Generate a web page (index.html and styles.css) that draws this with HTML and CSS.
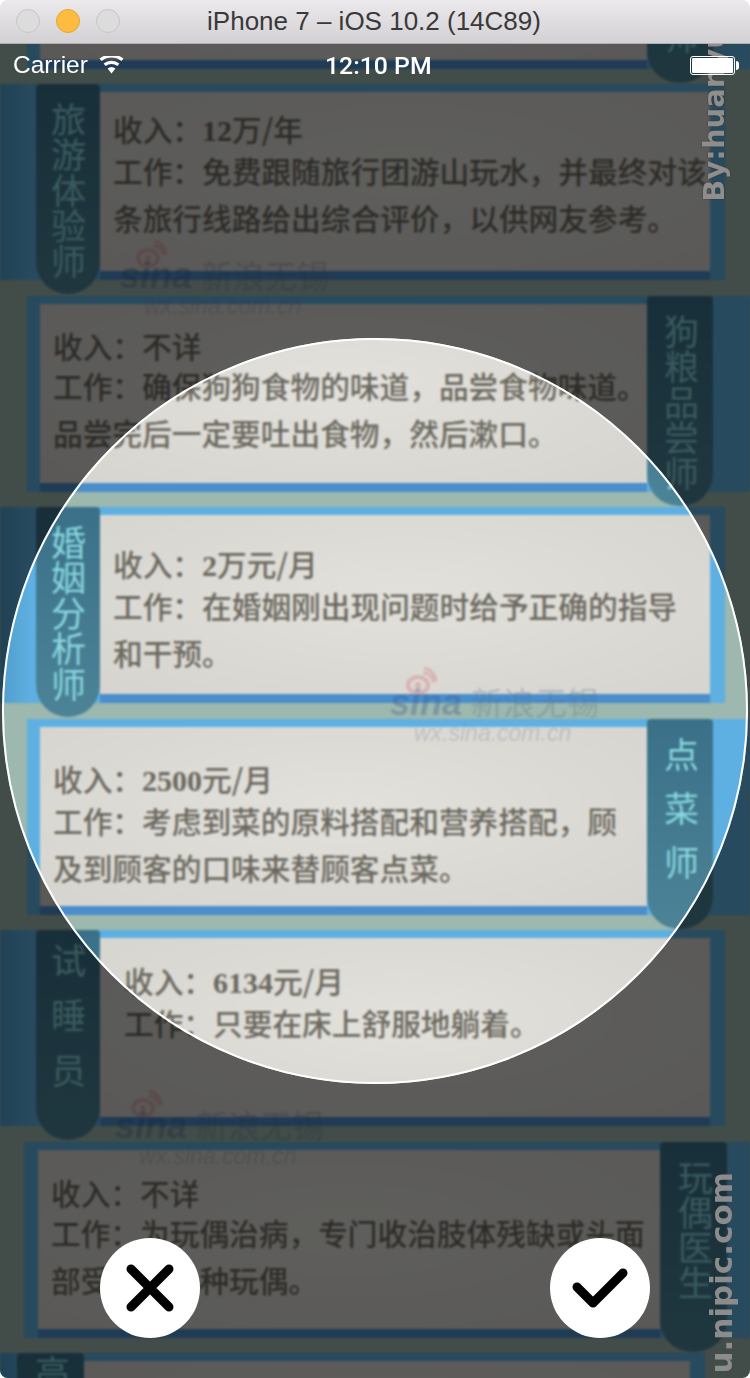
FILE: index.html
```html
<!DOCTYPE html>
<html lang="zh">
<head>
    <meta charset="UTF-8">
    <title>iPhone 7 – iOS 10.2 (14C89)</title>
    <link rel="stylesheet" href="styles.css">
</head>
<body>
    <div class="window">
        <header class="titlebar">
            <span class="light"></span>
            <span class="light light-min"></span>
            <span class="light"></span>
            <div class="title">iPhone 7 – iOS 10.2 (14C89)</div>
        </header>

        <main class="screen">
            <div class="poster">
                <section class="job job-right">
                    <div class="card">
                        <div class="paper"></div>
                        <h3 class="tab tab-cut">师</h3>
                    </div>
                </section>

                <section class="job job-left">
                    <div class="card">
                        <h3 class="tab tab-5">旅游体验师</h3>
                        <div class="paper pad-a">
                            <p class="income">收入：<b class="num">12</b>万/年</p>
                            <p class="duty">工作：免费跟随旅行团游山玩水，并最终对该<br>条旅行线路给出综合评价，以供网友参考。</p>
                        </div>
                    </div>
                    <div class="mark mark-a">
                        <svg class="mark-logo" viewBox="0 0 34 28"><ellipse cx="15" cy="18" rx="10" ry="8" fill="none" stroke="currentColor" stroke-width="4"/><circle cx="15" cy="18" r="3" fill="currentColor"/><path d="M20 6a9 9 0 0 1 10 9M21 1a14 14 0 0 1 12 14" fill="none" stroke="currentColor" stroke-width="3"/></svg>
                        <div class="mark-row"><span class="mark-sina">sina</span><span class="mark-name">新浪无锡</span></div>
                        <div class="mark-url">wx.sina.com.cn</div>
                    </div>
                </section>

                <section class="job job-right">
                    <div class="card">
                        <div class="paper pad-b">
                            <p class="income">收入：不详</p>
                            <p class="duty">工作：确保狗狗食物的味道，品尝食物味道。<br>品尝完后一定要吐出食物，然后漱口。</p>
                        </div>
                        <h3 class="tab tab-5">狗粮品尝师</h3>
                    </div>
                </section>

                <section class="job job-left">
                    <div class="card">
                        <h3 class="tab tab-5">婚姻分析师</h3>
                        <div class="paper pad-c">
                            <p class="income">收入：<b class="num">2</b>万元/月</p>
                            <p class="duty">工作：在婚姻刚出现问题时给予正确的指导<br>和干预。</p>
                        </div>
                    </div>
                    <div class="mark mark-b">
                        <svg class="mark-logo" viewBox="0 0 34 28"><ellipse cx="15" cy="18" rx="10" ry="8" fill="none" stroke="currentColor" stroke-width="4"/><circle cx="15" cy="18" r="3" fill="currentColor"/><path d="M20 6a9 9 0 0 1 10 9M21 1a14 14 0 0 1 12 14" fill="none" stroke="currentColor" stroke-width="3"/></svg>
                        <div class="mark-row"><span class="mark-sina">sina</span><span class="mark-name">新浪无锡</span></div>
                        <div class="mark-url">wx.sina.com.cn</div>
                    </div>
                </section>

                <section class="job job-right">
                    <div class="card">
                        <div class="paper pad-d">
                            <p class="income">收入：<b class="num">2500</b>元/月</p>
                            <p class="duty">工作：考虑到菜的原料搭配和营养搭配，顾<br>及到顾客的口味来替顾客点菜。</p>
                        </div>
                        <h3 class="tab tab-3">点菜师</h3>
                    </div>
                </section>

                <section class="job job-left">
                    <div class="card">
                        <h3 class="tab tab-3 tab-high">试睡员</h3>
                        <div class="paper pad-e">
                            <p class="income">收入：<b class="num">6134</b>元/月</p>
                            <p class="duty">工作：只要在床上舒服地躺着。</p>
                        </div>
                    </div>
                    <div class="mark mark-c">
                        <svg class="mark-logo" viewBox="0 0 34 28"><ellipse cx="15" cy="18" rx="10" ry="8" fill="none" stroke="currentColor" stroke-width="4"/><circle cx="15" cy="18" r="3" fill="currentColor"/><path d="M20 6a9 9 0 0 1 10 9M21 1a14 14 0 0 1 12 14" fill="none" stroke="currentColor" stroke-width="3"/></svg>
                        <div class="mark-row"><span class="mark-sina">sina</span><span class="mark-name">新浪无锡</span></div>
                        <div class="mark-url">wx.sina.com.cn</div>
                    </div>
                </section>

                <section class="job job-right job-shift">
                    <div class="card">
                        <div class="paper pad-f">
                            <p class="income">收入：不详</p>
                            <p class="duty">工作：为玩偶治病，专门收治肢体残缺或头面<br>部受损的各种玩偶。</p>
                        </div>
                        <h3 class="tab tab-4">玩偶医生</h3>
                    </div>
                </section>

                <section class="job job-left job-shift">
                    <div class="card">
                        <h3 class="tab tab-first">高</h3>
                        <div class="paper"></div>
                    </div>
                </section>
            </div>

            <!-- circle is see-through, its spread shadow dims the rest of the poster -->
            <div class="focus"></div>

            <div class="credit credit-by">By:huanyu</div>
            <div class="credit credit-nipic">u.nipic.com</div>

            <div class="statusbar">
                <div class="carrier">
                    Carrier
                    <svg class="wifi" width="25" height="18" viewBox="0 0 25 18"><path d="M12.5 17.5 8.6 12.6a6.2 6.2 0 0 1 7.8 0zM6.6 10.1 4.6 7.6a12.6 12.6 0 0 1 15.8 0l-2 2.5a9.4 9.4 0 0 0-11.8 0zM2.6 5.1.5 2.6a19 19 0 0 1 24 0l-2.1 2.5a15.8 15.8 0 0 0-19.8 0z" fill="#fff"/></svg>
                </div>
                <div class="clock">12:10 PM</div>
                <div class="battery"><span class="battery-fill"></span></div>
            </div>

            <div class="actions">
                <button class="round-btn">
                    <svg width="100" height="100" viewBox="0 0 100 100"><path d="M31 31 69 69M69 31 31 69" fill="none" stroke="#000" stroke-width="9" stroke-linecap="round"/></svg>
                </button>
                <button class="round-btn">
                    <svg width="100" height="100" viewBox="0 0 100 100"><path d="M27 49 43 65 73 35" fill="none" stroke="#000" stroke-width="9" stroke-linecap="round" stroke-linejoin="round"/></svg>
                </button>
            </div>
        </main>
    </div>
</body>
</html>
```

FILE: styles.css
```css
:root {
    --mat: #9db8ae;
    --frame: #5eb0e2;
    --stripe: #4a8ecb;
    --ink: #6c695f;
}

* {
    box-sizing: border-box;
}

body {
    margin: 0;
    background: #fff;
    font-family: "Noto Sans CJK SC", "Liberation Sans", sans-serif;
}

.window {
    width: 750px;
    height: 1378px;
    display: flex;
    flex-direction: column;
    border-radius: 8px;
    overflow: hidden;
}

.titlebar {
    position: relative;
    flex: none;
    height: 44px;
    display: flex;
    align-items: center;
    gap: 16px;
    padding: 0 0 2px 16px;
    background: linear-gradient(#ebe9eb, #d3d1d3);
    border-bottom: 1px solid #b1afb1;
}

.light {
    width: 24px;
    height: 24px;
    border-radius: 50%;
    background: #dcdcdc;
    border: 1px solid #c6c6c6;
}

.light-min {
    background: #fdbc40;
    border-color: #e4a536;
}

.title {
    position: absolute;
    left: 0;
    right: 2px;
    top: 5px;
    text-align: center;
    font-family: "Liberation Sans", sans-serif;
    font-size: 26px;
    line-height: 32px;
    color: #3a393a;
}

.screen {
    position: relative;
    flex: 1;
    overflow: hidden;
    background: var(--mat);
}

.poster {
    margin-top: -171.5px;
    filter: blur(0.8px);
}

.job {
    position: relative;
    height: 211.5px;
}

.card {
    height: 196px;
    display: flex;
    align-items: flex-start;
    background: var(--frame);
}

.job-left .card {
    width: 725px;
    padding-left: 36px;
    background: linear-gradient(90deg, #4f9cc9, var(--frame) 30px);
}

.job-right .card {
    margin-left: 27px;
    padding-left: 13px;
}

.paper {
    flex: 1;
    height: 179px;
    margin-top: 8px;
    padding-left: 13px;
    background: radial-gradient(ellipse at 50% 45%, #e2e1dc, #d6d4cf);
    box-shadow: 0 9px 0 var(--stripe);
    color: var(--ink);
    font-size: 29.7px;
    font-weight: 500;
    white-space: nowrap;
}

.job-left .paper {
    margin-right: 15px;
}

.tab {
    flex: none;
    width: 64px;
    height: 210px;
    margin: 0;
    padding-top: 18px;
    border-radius: 4px 4px 32px 32px;
    background: linear-gradient(#3a7189, #4c8397);
    color: #88d6dd;
    font-size: 35px;
    font-weight: 400;
    line-height: 64px;
    writing-mode: vertical-rl;
    text-orientation: upright;
    text-align-last: justify;
}

.job-right .tab {
    width: 66px;
    margin-right: 37px;
}

.tab-5 {
    padding-bottom: 15px;
}

.tab-4 {
    padding-bottom: 52px;
}

.tab-3 {
    padding-bottom: 49px;
}

.tab-high {
    padding-top: 13px;
    padding-bottom: 52px;
}

.tab-cut {
    padding-top: 146px;
}

.tab-first {
    padding-top: 2px;
}

.job-right.job-shift .card {
    margin-left: 24px;
    padding-left: 14px;
}

.job-right.job-shift .tab {
    width: 67px;
    margin-right: 23px;
}

.job-left.job-shift .card {
    width: 705px;
    padding-left: 17px;
}

.job-left.job-shift .tab {
    width: 67px;
}

.pad-a { padding-top: 20px; }
.pad-b { padding-top: 25px; }
.pad-c { padding-top: 32px; }
.pad-d { padding-top: 35px; }
.pad-e { padding-top: 26px; padding-left: 24px; }
.pad-f { padding-top: 26px; }

.income {
    margin: 0;
    line-height: 33px;
}

.duty {
    margin: 0;
    line-height: 47px;
}

.num {
    font-family: "Liberation Serif", serif;
    font-size: 30px;
}

.mark {
    position: absolute;
    z-index: 2;
    width: 220px;
    color: rgba(216, 112, 112, 0.35);
}

.mark-a { left: 120px; top: 156px; }
.mark-b { left: 390px; top: 160px; }
.mark-c { left: 115px; top: 160px; }

.mark-logo {
    display: block;
    width: 34px;
    height: 28px;
    margin: 0 0 -12px 13px;
}

.mark-row {
    display: flex;
    align-items: baseline;
    gap: 9px;
    line-height: 36px;
}

.mark-sina {
    font-family: "Liberation Sans", sans-serif;
    font-size: 36px;
    font-style: italic;
    font-weight: bold;
    color: rgba(60, 92, 140, 0.36);
}

.mark-name {
    font-size: 32px;
    font-weight: 400;
    color: rgba(90, 110, 135, 0.3);
}

.mark-url {
    margin-left: 24px;
    font-family: "Liberation Sans", sans-serif;
    font-size: 23px;
    font-style: italic;
    line-height: 24px;
    color: rgba(100, 120, 130, 0.25);
}

.focus {
    position: absolute;
    left: 2px;
    top: 294px;
    width: 746px;
    height: 746px;
    border: 2px solid #fff;
    border-radius: 50%;
    box-shadow: 0 0 0 900px rgba(0, 0, 0, 0.58);
}

.credit {
    position: absolute;
    font-family: "DejaVu Sans", sans-serif;
    font-weight: bold;
    writing-mode: vertical-rl;
    transform: rotate(180deg);
    white-space: nowrap;
    color: #8f8e8a;
}

.credit-by {
    left: 695px;
    top: -16px;
    font-size: 29px;
    line-height: 38px;
    text-shadow: 0 0 2px #333;
}

.credit-nipic {
    left: 702px;
    top: 1128px;
    font-size: 31px;
    line-height: 38px;
    color: #8b8c8b;
}

.statusbar {
    position: absolute;
    left: 13px;
    right: 15px;
    top: 5px;
    height: 32px;
    display: flex;
    align-items: center;
    justify-content: space-between;
    color: #fff;
    font-family: "Liberation Sans", sans-serif;
}

.carrier {
    display: flex;
    align-items: center;
    gap: 11px;
    font-size: 24.5px;
}

.clock {
    position: absolute;
    left: 312px;
    font-family: "Roboto", sans-serif;
    font-size: 24.8px;
    font-weight: 500;
}

.wifi {
    margin-top: -1px;
}

.battery {
    position: relative;
    width: 45px;
    height: 19px;
    padding: 1px;
    border: 1px solid #fff;
    border-radius: 3px;
}

.battery::after {
    content: "";
    position: absolute;
    right: -5px;
    top: 4px;
    width: 3px;
    height: 9px;
    border-radius: 0 3px 3px 0;
    background: #fff;
}

.battery-fill {
    display: block;
    height: 100%;
    border-radius: 1px;
    background: #fff;
}

.actions {
    position: absolute;
    left: 100px;
    right: 100px;
    bottom: 40px;
    display: flex;
    justify-content: space-between;
}

.round-btn {
    width: 100px;
    height: 100px;
    padding: 0;
    border: 0;
    border-radius: 50%;
    background: #fff;
}

.round-btn svg {
    display: block;
}
```
